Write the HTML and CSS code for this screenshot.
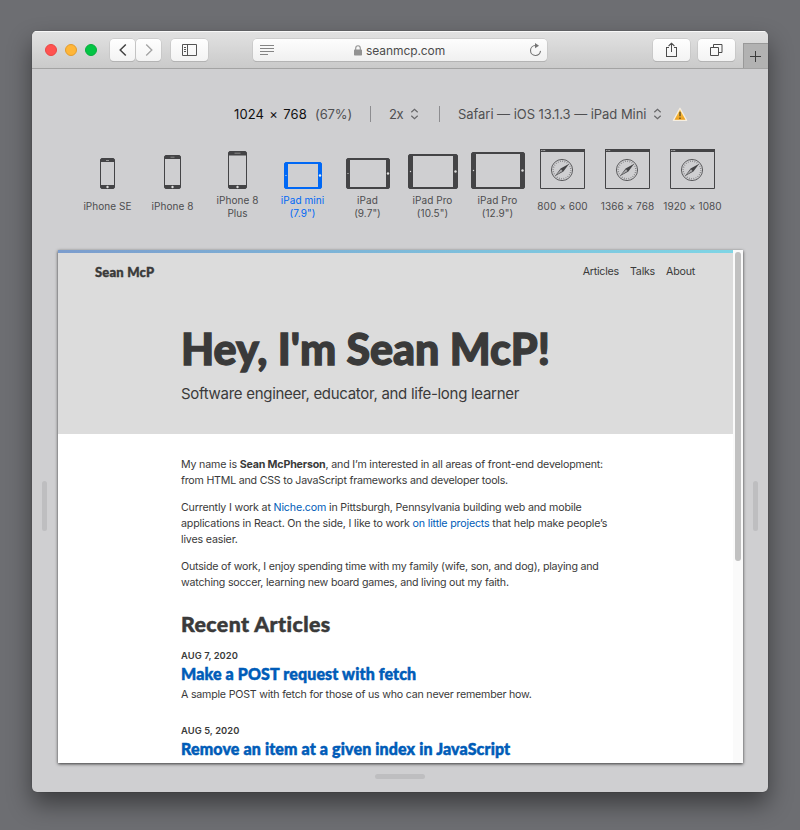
FILE: index.html
```
<!DOCTYPE html>
<html lang="en">
<head>
<meta charset="utf-8">
<title>Sean McP</title>
<link rel="stylesheet" href="styles.css">
</head>
<body>
<svg width="0" height="0" class="defs">
  <defs>
    <symbol id="browser" viewBox="0 0 45 40">
      <path d="M.5 2.5h44v37H.5z" fill="none" stroke="#444446"/>
      <path d="M0 0h45v3H0z" fill="#444446"/>
      <path d="M1.2 1.5h4" stroke="#bbb" stroke-width=".9" stroke-dasharray="1 .5"/>
      <circle cx="22" cy="21" r="10.6" fill="none" stroke="#505052" stroke-width=".9"/>
      <circle cx="22" cy="21" r="8.8" fill="none" stroke="#77777a" stroke-width="1.4" stroke-dasharray=".7 1.604"/>
      <path d="M29.2 14.8 20.6 19.4 14.8 27.2 23.4 22.6z" fill="#444446"/>
      <path d="M21 20.2 16.2 26 22.6 22z" fill="#a9a9ab"/>
    </symbol>
    <symbol id="updown" viewBox="0 0 8 12">
      <path d="M.8 4.2 4 1.2l3.2 3M.8 7.8l3.2 3 3.2-3" fill="none" stroke="#68686a" stroke-width="1.2"/>
    </symbol>
  </defs>
</svg>
<div class="window">
  <header class="toolbar">
    <div class="lights"><i class="red"></i><i class="amber"></i><i class="green"></i></div>
    <div class="history">
      <span class="btn back"><svg width="10" height="14" viewBox="0 0 10 14"><path d="M7.8 1.5 2.2 7l5.6 5.5" fill="none" stroke="#444" stroke-width="1.5"/></svg></span>
      <span class="btn forward"><svg width="10" height="14" viewBox="0 0 10 14"><path d="M2.2 1.5 7.8 7l-5.6 5.5" fill="none" stroke="#a5a5a5" stroke-width="1.4"/></svg></span>
    </div>
    <span class="btn sidebar"><svg width="15" height="12" viewBox="0 0 15 12"><path d="M.5.5h14v11H.5zM5.5.5v11M2 3.5h2M2 5.500h2M2 7.500h2" fill="none" stroke="#555"/></svg></span>
    <div class="address">
      <svg width="14" height="10" viewBox="0 0 14 10"><path d="M0 .5h14M0 3.5h14M0 6.5h14M0 9.5h8" stroke="#858585"/></svg>
      <span class="url"><svg width="8" height="11" viewBox="0 0 8 11"><rect y="4.5" width="8" height="6" rx=".7" fill="#929292"/><path d="M1.7 5V3.3a2.3 2.5 0 0 1 4.6 0V5" fill="none" stroke="#929292" stroke-width="1.1"/></svg>seanmcp.com</span>
      <svg width="13" height="14" viewBox="0 0 13 14"><path d="M7.4 2.5H6.3a5 5 0 1 0 5.2 5.4" fill="none" stroke="#747474" stroke-width="1.1"/><path d="M6 0 10 2.7 6 5.3z" fill="#747474"/></svg>
    </div>
    <span class="btn share"><svg width="13" height="16" viewBox="0 0 13 16"><path d="M4 5.5H1.5v9h10v-9H9M6.5 10V1.3M3.6 4 6.5 1.2 9.4 4" fill="none" stroke="#4c4c4c" stroke-width="1.05"/></svg></span>
    <span class="btn tabs"><svg width="13" height="14" viewBox="0 0 13 14"><path d="M.5 4.5h8v8h-8zM3.500 4.500v-3h8.500v8H8.500" fill="none" stroke="#4c4c4c"/></svg></span>
    <span class="newtab"><svg width="11" height="11" viewBox="0 0 11 11"><path d="M5.5 0v11M0 5.5h11" stroke="#3c3c3c"/></svg></span>
  </header>

  <div class="settings">
    <span class="size">1024 × 768</span><span class="scale">(67%)</span>
    <i class="rule"></i>
    <span class="ratio">2x</span><svg class="arrows" width="9" height="12"><use href="#updown"/></svg>
    <i class="rule second"></i>
    <span class="agent">Safari — iOS 13.1.3 — iPad Mini</span><svg class="arrows agent-arrows" width="9" height="12"><use href="#updown"/></svg>
    <svg class="warning" width="16" height="15" viewBox="0 0 16 15"><defs><linearGradient id="w" x2="0" y2="1"><stop stop-color="#ffd35d"/><stop offset="1" stop-color="#eb9c18"/></linearGradient></defs><path d="M8 1.2 14.6 13.4H1.4z" fill="url(#w)" stroke="#f6eee0" stroke-width="1.3" stroke-linejoin="round"/><path d="M8 4.800v4.500M8 10.500v1.500" stroke="#6b5223" stroke-width="1.500"/></svg>
  </div>

  <div class="devices">
    <div class="device"><svg width="15" height="31"><path d="M1.5 0h12l1.500 1.500v28L13.500 31h-12L0 29.500v-28zM1 4v23h13V4z" fill="#444446" fill-rule="evenodd"/><path d="M6 2.500h3" stroke="#999"/><circle cx="7.500" cy="29" r="1.200" fill="#ddd"/></svg><span>iPhone SE</span></div>
    <div class="device"><svg width="17" height="34"><path d="M1.500 0h14L17 1.500v31L15.500 34h-14L0 32.500v-31zM1 4v26h15V4z" fill="#444446" fill-rule="evenodd"/><path d="M6.500 2.200h4" stroke="#888"/><circle cx="8.500" cy="32" r="1.200" fill="#ddd"/></svg><span>iPhone 8</span></div>
    <div class="device"><svg width="19" height="38"><path d="M1.500 0h16L19 1.500v35L17.500 38h-16L0 36.500v-35zM1 4.500V34h17V4.500z" fill="#444446" fill-rule="evenodd"/><path d="M6.500 2.200h6" stroke="#888"/><circle cx="9.500" cy="36" r="1.200" fill="#ddd"/></svg><span class="two">iPhone 8<br>Plus</span></div>
    <div class="device active"><svg width="38" height="27"><path d="M1.500 0h35L38 1.500v24L36.500 27h-35L0 25.500v-24zM4 2v23h30V2z" fill="#0068f5" fill-rule="evenodd"/><path d="M1 13.500h2" stroke="#71a8ef"/><circle cx="36" cy="13.500" r="1.200" fill="#eee"/></svg><span class="two">iPad mini<br>(7.9")</span></div>
    <div class="device"><svg width="44" height="31"><path d="M1.500 0h41L44 1.500v28L42.500 31h-41L0 29.500v-28zM4 2v27h36V2z" fill="#444446" fill-rule="evenodd"/><path d="M1 15.500h2" stroke="#888"/><circle cx="42" cy="15.500" r="1.200" fill="#ddd"/></svg><span class="two">iPad<br>(9.7")</span></div>
    <div class="device"><svg width="50" height="35"><path d="M1.500 0h47L50 1.500v32L48.500 35h-47L0 33.500v-32zM5 2v31h40V2z" fill="#444446" fill-rule="evenodd"/><circle cx="2.500" cy="17.500" r=".7" fill="#ddd"/><circle cx="47.500" cy="17.500" r="1.200" fill="#ddd"/></svg><span class="two">iPad Pro<br>(10.5")</span></div>
    <div class="device"><svg width="54" height="37"><path d="M1.500 0h51L54 1.500v34L52.500 37h-51L0 35.500v-34zM5 2v33h44V2z" fill="#444446" fill-rule="evenodd"/><circle cx="2.500" cy="18.500" r=".7" fill="#ddd"/><circle cx="51.500" cy="18.500" r="1.200" fill="#ddd"/></svg><span class="two">iPad Pro<br>(12.9")</span></div>
    <div class="device"><svg width="45" height="40"><use href="#browser"/></svg><span>800 × 600</span></div>
    <div class="device"><svg width="45" height="40"><use href="#browser"/></svg><span>1366 × 768</span></div>
    <div class="device"><svg width="45" height="40"><use href="#browser"/></svg><span>1920 × 1080</span></div>
  </div>

  <div class="stage">
    <i class="grip"></i>
    <div class="viewport">
      <div class="page">
        <div class="hero">
          <nav><b>Sean McP</b><a>Articles</a><a>Talks</a><a>About</a></nav>
          <h1>Hey, I'm Sean McP!</h1>
          <p class="lead">Software engineer, educator, and life-long learner</p>
        </div>
        <main>
          <p><span class="intro">My name is <strong>Sean McPherson</strong>, and I’m interested in all areas of front-end development:</span><br>from HTML and CSS to JavaScript frameworks and developer tools.</p>
          <p class="work">Currently I work at <a>Niche.com</a> in Pittsburgh, Pennsylvania building web and mobile<br>applications in React. On the side, I like to work <a>on little projects</a> that help make people’s<br>lives easier.</p>
          <p>Outside of work, I enjoy spending time with my family (wife, son, and dog), playing and<br>watching soccer, learning new board games, and living out my faith.</p>
          <h2>Recent Articles</h2>
          <article><time>AUG 7, 2020</time><h3>Make a POST request with fetch</h3><p>A sample POST with fetch for those of us who can never remember how.</p></article>
          <article><time>AUG 5, 2020</time><h3>Remove an item at a given index in JavaScript</h3></article>
        </main>
      </div>
      <div class="scrollbar"><i></i></div>
    </div>
    <i class="grip"></i>
  </div>
  <div class="bottom"><i></i></div>
</div>
</body>
</html>
```
FILE: styles.css
```
* { box-sizing: border-box; }
body {
  margin: 0;
  height: 830px;
  padding: 31px 32px 38px;
  overflow: hidden;
  background: #6d6e72;
  font-family: Inter, "Liberation Sans", sans-serif;
}
.defs { position: absolute; }
svg { display: block; flex: none; }
.window {
  height: 761px;
  overflow: hidden;
  border-radius: 5px;
  background: #cfcfd1;
  box-shadow: 0 0 1px rgba(0,0,0,.6), 0 12px 24px rgba(0,0,0,.45);
}
.toolbar {
  display: flex;
  align-items: center;
  height: 38px;
  padding-left: 13px;
  border-bottom: 1px solid #a3a3a3;
  background: linear-gradient(#e2e2e2, #cacaca);
  box-shadow: inset 0 1px #f8f8f8;
}
.lights { display: flex; gap: 8px; margin-right: 13px; }
.lights i { width: 12px; height: 12px; border-radius: 50%; }
.red { background: #ff5250; border: 1px solid #e94643; }
.amber { background: #ffb638; border: 1px solid #e39c2c; }
.green { background: #03c544; border: 1px solid #08ad3d; }
.btn {
  display: flex;
  align-items: center;
  justify-content: center;
  height: 22px;
  border-radius: 4px;
  background: linear-gradient(#fefefe, #f3f3f3);
  box-shadow: 0 0 0 .5px #bdbdbd, 0 1px 0 #aaa;
}
.history { display: flex; gap: 1px; }
.back, .forward { width: 25px; }
.sidebar { width: 37px; margin-left: 10px; }
.address {
  display: flex;
  align-items: center;
  width: 294px;
  height: 22px;
  margin-left: 45px;
  padding: 0 5px 0 7px;
  border-radius: 4px;
  background: linear-gradient(#fdfdfd, #f0f0f0);
  box-shadow: 0 0 0 .5px #bdbdbd, 0 1px 0 #aaa;
}
.url {
  display: flex;
  align-items: center;
  gap: 4px;
  margin: 0 auto 0 80px;
  padding-top: 1px;
  color: #4c4c4c;
  font-size: 12px;
  letter-spacing: -.08px;
}
.share { width: 37px; margin-left: 106px; }
.tabs { width: 37px; margin-left: 8px; }
.newtab {
  display: flex;
  align-items: center;
  justify-content: center;
  width: 25px;
  height: 25px;
  margin-left: auto;
  padding-right: 2px;
  align-self: flex-end;
  border: solid #999;
  border-width: 1px 0 0 1px;
  background: #b2b2b2;
}
.settings {
  display: flex;
  align-items: center;
  height: 91px;
  padding: 0 0 1px 202px;
  color: #4f4f51;
  font-size: 13px;
  white-space: nowrap;
}
.size { width: 81px; color: #111; letter-spacing: .1px; word-spacing: 1.5px; }
.scale { width: 55px; letter-spacing: -.1px; }
.rule { width: 1px; height: 16px; margin-right: 18px; background: #8d8d90; }
.rule.second { margin: 0 18px 0 20px; }
.ratio { width: 21px; letter-spacing: -.5px; }
.agent { width: 195px; letter-spacing: -.05px; }
.warning { margin-left: 10px; }
.devices {
  display: grid;
  grid-template-columns: repeat(10, 65px);
  margin-left: 43px;
  height: 59px;
}
.device {
  display: grid;
  grid-template-rows: 29px 26px;
  justify-items: center;
  row-gap: 4px;
  color: #4d4d4f;
  font-size: 10px;
  line-height: 13px;
  letter-spacing: .06px;
  text-align: center;
  white-space: nowrap;
}
.device svg { align-self: end; }
.device span { align-self: center; }
.device .two { margin: 1px 0 -1px; }
.device.active { color: #0068f5; }
.stage { display: flex; align-items: center; height: 513px; margin-top: 31px; padding: 0 10px; }
.grip { width: 5px; height: 50px; margin-bottom: 2px; border-radius: 3px; background: #bebec0; }
.viewport {
  display: flex;
  width: 685px;
  height: 513px;
  margin: 0 10px 0 11px;
  background: #fff;
  box-shadow: 0 1px 3px rgba(0,0,0,.75);
}
.page {
  width: 675px;
  overflow: hidden;
  color: #3a3a3a;
  font-size: 10.67px;
  line-height: 16px;
  letter-spacing: -.22px;
  white-space: nowrap;
}
.scrollbar { width: 10px; padding: 2px; background: #fafafa; }
.scrollbar i { display: block; width: 6px; height: 309px; border-radius: 3px; background: #c1c1c1; }
.hero {
  height: 184px;
  background: linear-gradient(90deg, #7c9dcd, #7fd5e5) top / 100% 3px no-repeat #dcdcdc;
}
nav { display: flex; align-items: center; height: 43px; padding: 0 38px 0 37px; }
nav b { margin-right: auto; font: 900 13px Lato, sans-serif; letter-spacing: .2px; -webkit-text-stroke: .4px; }
nav a { margin-left: 11px; }
h1, h2, h3 { margin: 0; font-family: Lato, sans-serif; font-weight: 900; -webkit-text-stroke: .5px; }
h1 { margin: 29px 0 0 123px; font-size: 43px; line-height: 54px; letter-spacing: 0; -webkit-text-stroke-width: 1.3px; }
.lead { margin: 7px 0 0 123px; font-size: 15px; line-height: 22px; letter-spacing: -.29px; }
main { padding: 23px 0 0 123px; }
main p { margin: 0 0 11px; }
main .intro { letter-spacing: -.18px; }
main .work { letter-spacing: -.17px; }
main a { color: #005cb8; }
h2 { margin-top: 20px; font-size: 21.3px; line-height: 26px; letter-spacing: .41px; }
article { height: 75px; padding-top: 11px; }
time { display: block; font-size: 9.33px; font-weight: 600; line-height: 16px; letter-spacing: .08px; }
h3 { margin: -2px 0 2px; color: #005cb8; font-size: 16px; line-height: 23px; letter-spacing: .13px; }
.bottom { display: flex; justify-content: center; padding-top: 11px; }
.bottom i { width: 50px; height: 5px; border-radius: 3px; background: #bebec0; }
```
